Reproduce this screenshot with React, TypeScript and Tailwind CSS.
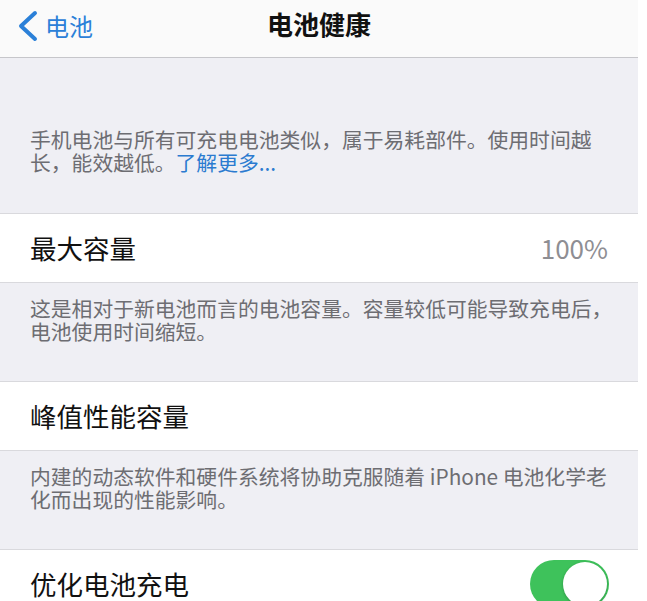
import React from "react";

const font = { fontFamily: '"Noto Sans CJK SC", "Noto Sans", sans-serif' };

function Cell({ label, value, toggle }: { label: string; value?: string; toggle?: boolean }) {
  return (
    <div className="flex h-[70px] items-center justify-between border-y border-[#d9d9dd] bg-white pl-[30px] pr-[30px]">
      <span className="text-[26.5px] leading-none text-[#111111]">{label}</span>
      {value && <span className="text-[26px] leading-none text-[#8e8e93]">{value}</span>}
      {toggle && (
        <div className="relative mr-[-1px] h-[48px] w-[79px] rounded-full bg-[#3ec25b]">
          <div className="absolute right-[2px] top-[2px] h-[44px] w-[44px] rounded-full bg-white shadow-[0_1px_3px_rgba(0,0,0,0.25)]" />
        </div>
      )}
    </div>
  );
}

function Footer({ lines, className }: { lines: React.ReactNode[]; className: string }) {
  return (
    <div className={`bg-[#efeff4] pl-[30px] text-[20.8px] leading-[23px] text-[#6d6d72] ${className}`}>
      {lines.map((l, i) => (
        <div key={i} className="whitespace-nowrap">
          {l}
        </div>
      ))}
    </div>
  );
}

export default function App() {
  return (
    <div className="h-[601px] w-[647px] overflow-hidden bg-white" style={font}>
      <div className="w-[638px]">
        {/* navigation bar */}
        <div className="relative h-[58px] border-b border-[#c6c6ca] bg-[#fafafa]">
          <div className="absolute left-[17px] top-[10px] flex items-center">
            <svg width="22" height="32" viewBox="0 0 22 32" fill="none">
              <path d="M18 3 L4 16 L18 29" stroke="#2b80d8" strokeWidth="4" strokeLinecap="round" strokeLinejoin="round" />
            </svg>
            <span className="ml-[6px] text-[24px] leading-none text-[#2b80d8]">电池</span>
          </div>
          <div className="absolute left-0 right-0 top-[9px] text-center text-[26px] font-semibold leading-[30px] text-[#111111]">
            电池健康
          </div>
        </div>

        <Footer
          className="h-[155px] pt-[70px]"
          lines={[
            "手机电池与所有可充电电池类似，属于易耗部件。使用时间越",
            <>
              长，能效越低。<span className="text-[#2b7bd0]">了解更多...</span>
            </>,
          ]}
        />

        <Cell label="最大容量" value="100%" />

        <Footer
          className="h-[98px] pt-[14px]"
          lines={["这是相对于新电池而言的电池容量。容量较低可能导致充电后，", "电池使用时间缩短。"]}
        />

        <Cell label="峰值性能容量" />

        <Footer
          className="h-[98px] pt-[14px]"
          lines={["内建的动态软件和硬件系统将协助克服随着 iPhone 电池化学老", "化而出现的性能影响。"]}
        />

        <Cell label="优化电池充电" toggle />
      </div>
    </div>
  );
}
